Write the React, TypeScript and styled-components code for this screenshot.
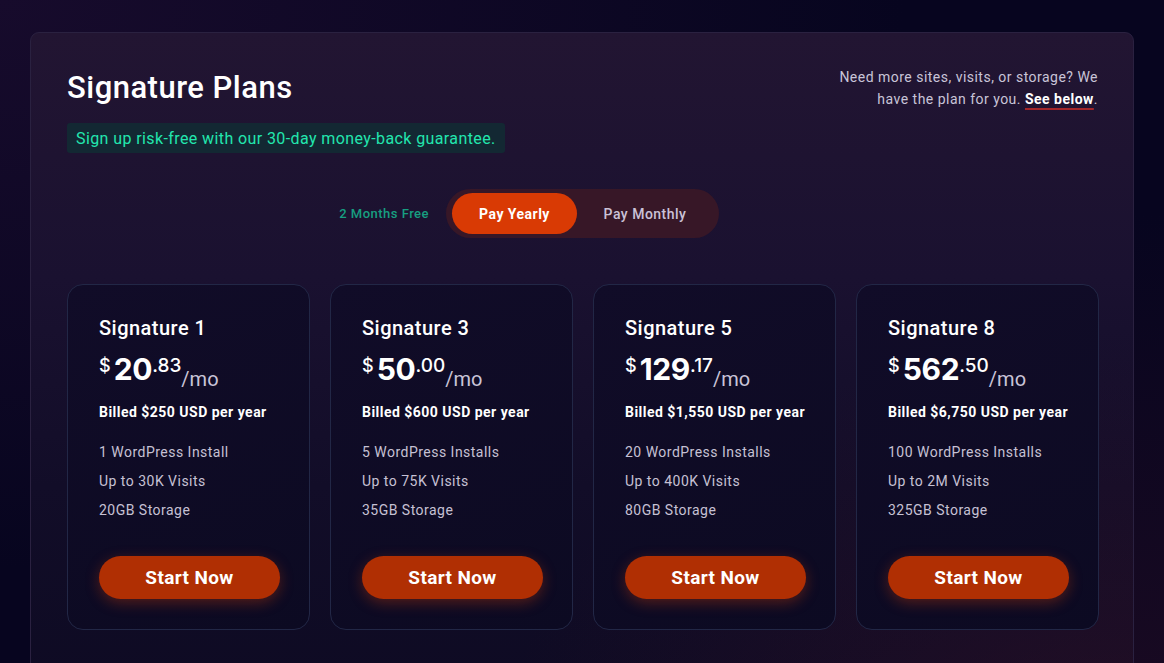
import React, { useState } from "react";
import styled, { createGlobalStyle } from "styled-components";

const GlobalStyle = createGlobalStyle`
  html, body {
    margin: 0;
    padding: 0;
  }
  body {
    min-height: 100vh;
    background:
      radial-gradient(ellipse at 0% 0%, #170b2c 0%, rgba(23, 11, 44, 0) 55%),
      radial-gradient(ellipse at 100% 100%, #1a0a22 0%, rgba(26, 10, 34, 0) 50%),
      #07051f;
    font-family: Roboto, "Liberation Sans", sans-serif;
    letter-spacing: 0.03em;
    color: #ffffff;
    overflow: hidden;
  }
`;

interface Plan {
  name: string;
  dollars: string;
  cents: string;
  billed: string;
  features: string[];
}

const plans: Plan[] = [
  {
    name: "Signature 1",
    dollars: "20",
    cents: ".83",
    billed: "Billed $250 USD per year",
    features: ["1 WordPress Install", "Up to 30K Visits", "20GB Storage"],
  },
  {
    name: "Signature 3",
    dollars: "50",
    cents: ".00",
    billed: "Billed $600 USD per year",
    features: ["5 WordPress Installs", "Up to 75K Visits", "35GB Storage"],
  },
  {
    name: "Signature 5",
    dollars: "129",
    cents: ".17",
    billed: "Billed $1,550 USD per year",
    features: ["20 WordPress Installs", "Up to 400K Visits", "80GB Storage"],
  },
  {
    name: "Signature 8",
    dollars: "562",
    cents: ".50",
    billed: "Billed $6,750 USD per year",
    features: ["100 WordPress Installs", "Up to 2M Visits", "325GB Storage"],
  },
];

const Panel = styled.section`
  box-sizing: border-box;
  width: 1104px;
  margin: 32px 0 0 30px;
  min-height: 700px;
  padding: 37px 35px 40px 36px;
  border: 1px solid #2a2140;
  border-radius: 9px;
  background:
    radial-gradient(ellipse at 100% 100%, rgba(70, 20, 40, 0.35) 0%, rgba(70, 20, 40, 0) 40%),
    linear-gradient(180deg, #221532 0%, #1a1130 35%, #120d28 65%, #0d0a22 100%);
`;

const Header = styled.header`
  display: flex;
  justify-content: space-between;
  align-items: flex-start;
`;

const TitleBlock = styled.div`
  display: flex;
  flex-direction: column;
  align-items: flex-start;
`;

const Title = styled.h1`
  margin: 0;
  font-size: 31px;
  line-height: 36px;
  font-weight: 500;
  color: #ffffff;
`;

const Guarantee = styled.div`
  margin-top: 17px;
  height: 30px;
  padding: 0 9px;
  display: flex;
  align-items: center;
  border-radius: 3px;
  background: #132833;
  color: #22e6ae;
  font-size: 16px;
  letter-spacing: 0.025em;
`;

const Note = styled.p`
  margin: -4px 0 0;
  font-size: 14px;
  line-height: 22px;
  text-align: right;
  color: #c9c4d8;
`;

const NoteLink = styled.a`
  color: #ffffff;
  font-weight: 700;
  text-decoration: underline;
  text-decoration-color: #a3262a;
  text-decoration-thickness: 2px;
  text-underline-offset: 4px;
`;

const ToggleRow = styled.div`
  display: grid;
  grid-template-columns: 1fr auto 1fr;
  align-items: center;
  margin-top: 36px;
`;

const FreeLabel = styled.span`
  justify-self: end;
  margin-right: 17px;
  font-size: 13px;
  font-weight: 500;
  color: #179e80;
`;

const Toggle = styled.div`
  display: flex;
  align-items: center;
  height: 49px;
  box-sizing: border-box;
  padding: 4px 6px;
  border-radius: 25px;
  background: #371727;
`;

const ToggleOption = styled.button<{ $active?: boolean }>`
  height: 41px;
  padding: 0;
  width: ${(p) => (p.$active ? "125px" : "136px")};
  border: none;
  border-radius: 21px;
  cursor: pointer;
  font-family: inherit;
  letter-spacing: inherit;
  font-size: 14px;
  font-weight: ${(p) => (p.$active ? 700 : 500)};
  color: ${(p) => (p.$active ? "#ffffff" : "#cbc2d7")};
  background: ${(p) => (p.$active ? "#d93a04" : "transparent")};
`;

const Cards = styled.div`
  display: grid;
  grid-template-columns: repeat(4, 1fr);
  gap: 20px;
  margin-top: 46px;
`;

const Card = styled.article`
  box-sizing: border-box;
  padding: 31px 29px 30px 31px;
  border: 1px solid #222746;
  border-radius: 16px;
  background: linear-gradient(160deg, #110c28 0%, #0c0a22 100%);
`;

const PlanName = styled.h2`
  margin: 0;
  font-size: 20px;
  line-height: 24px;
  font-weight: 500;
  color: #ffffff;
`;

const Price = styled.div`
  display: flex;
  align-items: flex-start;
  height: 40px;
  margin-top: 9px;
  color: #ffffff;
  letter-spacing: 0;
`;

const Currency = styled.span`
  font-family: Inter, Roboto, sans-serif;
  font-size: 18px;
  font-weight: 500;
  margin-top: 6px;
  margin-right: 3px;
`;

const Dollars = styled.span`
  font-family: Inter, Roboto, sans-serif;
  font-size: 30px;
  font-weight: 700;
  line-height: 40px;
  letter-spacing: -0.3px;
`;

const Cents = styled.span`
  font-family: Inter, Roboto, sans-serif;
  font-size: 19px;
  font-weight: 500;
  margin-top: 5px;
`;

const PerMonth = styled.span`
  align-self: flex-end;
  font-size: 20px;
  line-height: 20px;
  color: #c9c4d8;
`;

const Billed = styled.div`
  margin-top: 13px;
  font-size: 14px;
  line-height: 20px;
  font-weight: 700;
  color: #ffffff;
`;

const Features = styled.ul`
  list-style: none;
  margin: 16px 0 0;
  padding: 0;
`;

const Feature = styled.li`
  font-size: 14px;
  line-height: 29px;
  color: #c6c1d4;
`;

const StartButton = styled.button`
  display: block;
  width: 181px;
  height: 43px;
  margin-top: 31px;
  border: none;
  border-radius: 22px;
  background: #b02f03;
  box-shadow: 0 4px 14px rgba(214, 62, 10, 0.35);
  color: #ffffff;
  font-family: inherit;
  letter-spacing: 0.02em;
  font-size: 19px;
  font-weight: 700;
  cursor: pointer;
`;

const App = () => {
  const [yearly, setYearly] = useState(true);

  return (
    <>
      <GlobalStyle />
      <Panel>
        <Header>
          <TitleBlock>
            <Title>Signature Plans</Title>
            <Guarantee>Sign up risk-free with our 30-day money-back guarantee.</Guarantee>
          </TitleBlock>
          <Note>
            Need more sites, visits, or storage? We
            <br />
            have the plan for you. <NoteLink>See below</NoteLink>.
          </Note>
        </Header>

        <ToggleRow>
          <FreeLabel>2 Months Free</FreeLabel>
          <Toggle>
            <ToggleOption $active={yearly} onClick={() => setYearly(true)}>
              Pay Yearly
            </ToggleOption>
            <ToggleOption $active={!yearly} onClick={() => setYearly(false)}>
              Pay Monthly
            </ToggleOption>
          </Toggle>
          <span />
        </ToggleRow>

        <Cards>
          {plans.map((plan) => (
            <Card key={plan.name}>
              <PlanName>{plan.name}</PlanName>
              <Price>
                <Currency>$</Currency>
                <Dollars>{plan.dollars}</Dollars>
                <Cents>{plan.cents}</Cents>
                <PerMonth>/mo</PerMonth>
              </Price>
              <Billed>{plan.billed}</Billed>
              <Features>
                {plan.features.map((f) => (
                  <Feature key={f}>{f}</Feature>
                ))}
              </Features>
              <StartButton>Start Now</StartButton>
            </Card>
          ))}
        </Cards>
      </Panel>
    </>
  );
};

export default App;
